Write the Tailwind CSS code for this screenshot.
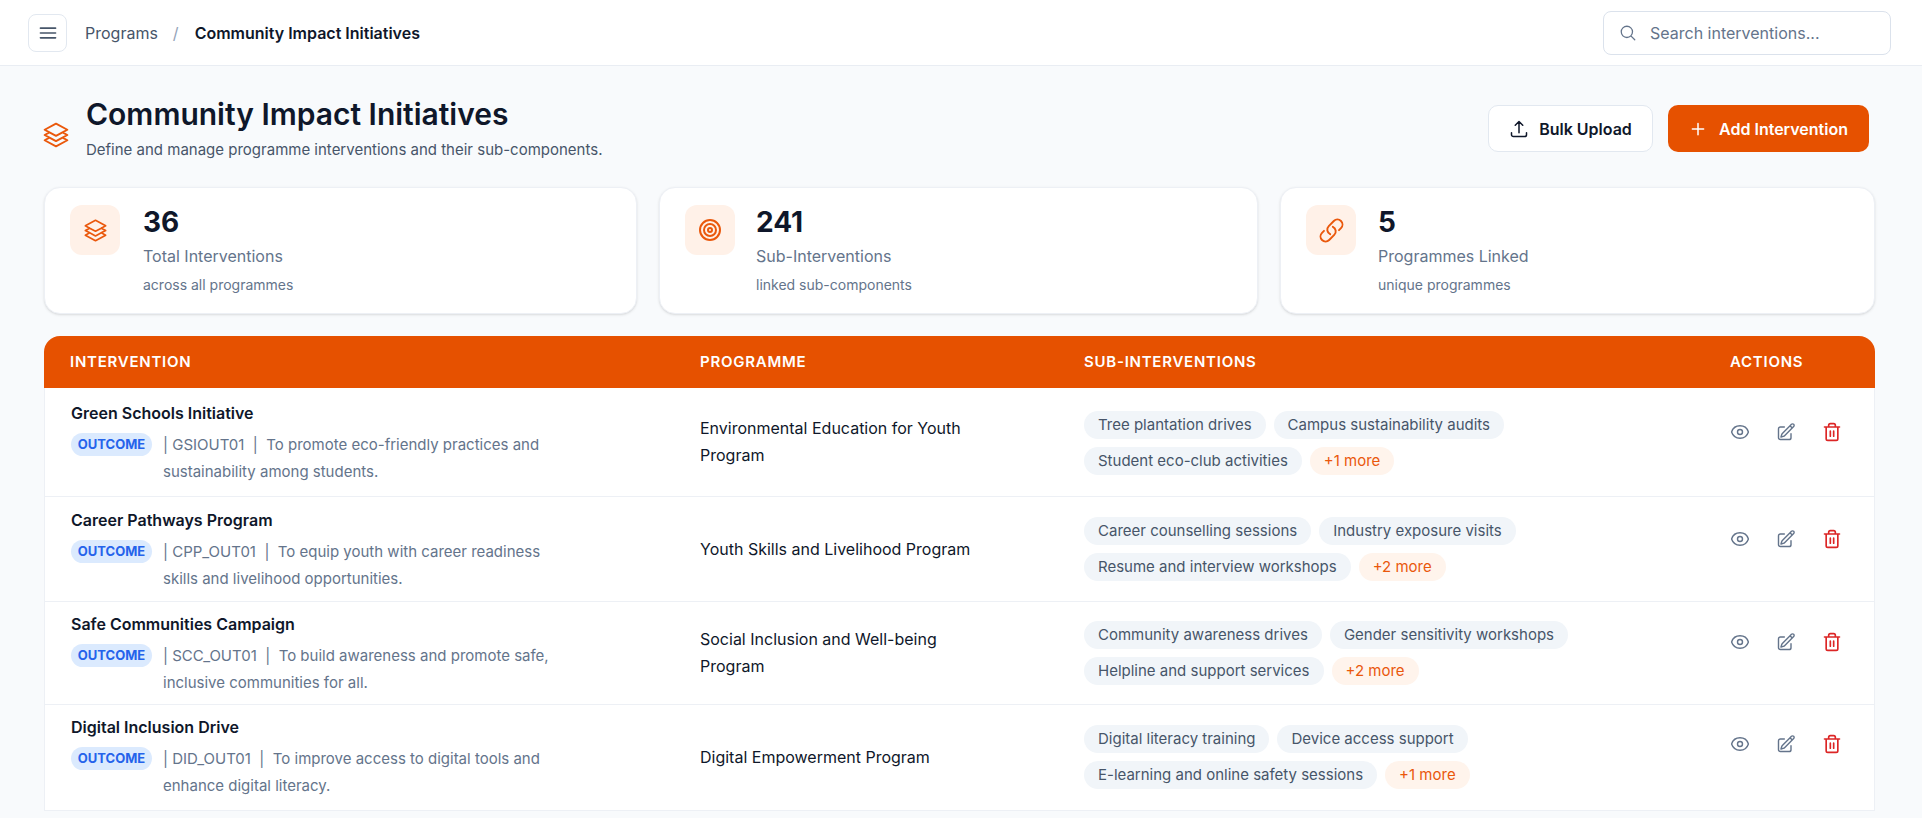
<!DOCTYPE html>
<html lang="en">
<head>
<meta charset="utf-8">
<title>Community Impact Initiatives</title>
<script src="https://cdn.jsdelivr.net/npm/@tailwindcss/browser@4"></script>
</head>
<body class="h-screen overflow-hidden bg-[#f8fafc] font-[Inter,sans-serif] text-[#0f172a]">
  <!-- top bar -->
  <header class="h-[66px] bg-white border-b border-[#e9edf3] pl-[28px] pr-[31px] flex items-center justify-between">
    <div class="flex items-center">
      <button class="w-[39px] h-[38px] flex items-center justify-center rounded-lg border border-[#e2e8f0] bg-white text-[#475569]">
        <svg class="w-[22px] h-[22px]" fill="none" viewBox="0 0 24 24" stroke="currentColor" stroke-width="1.8" stroke-linecap="round"><path d="M3.75 6.75h16.5M3.75 12h16.5m-16.5 5.25h16.5"/></svg>
      </button>
      <span class="ml-[18px] text-[16px] text-[#475569]">Programs</span>
      <span class="ml-[15px] text-[16px] text-[#94a3b8]">/</span>
      <span class="ml-[16px] text-[16px] font-semibold text-[#0f172a]">Community Impact Initiatives</span>
    </div>
    <div class="w-[288px] h-[44px] flex items-center gap-[13px] rounded-lg border border-[#dbe2ec] bg-white pl-[15px]">
      <svg class="w-[18px] h-[18px] shrink-0 text-[#64748b]" fill="none" viewBox="0 0 24 24" stroke="currentColor" stroke-width="1.7" stroke-linecap="round" stroke-linejoin="round"><path d="m21 21-5.197-5.197m0 0A7.5 7.5 0 1 0 5.196 5.196a7.5 7.5 0 0 0 10.607 10.607Z"/></svg>
      <input type="text" placeholder="Search interventions..." class="w-full bg-transparent outline-none text-[16px] placeholder:text-[#64748b]">
    </div>
  </header>

  <main class="pl-[44px] pr-[47px]">
    <!-- title row -->
    <div class="h-[121px] flex items-start justify-between">
      <div class="flex items-center pt-[30px]">
        <svg class="w-[28px] h-[28px] ml-[-2px] mt-[13px] text-[#ea580c]" fill="none" viewBox="0 0 24 24" stroke="currentColor" stroke-width="1.6" stroke-linecap="round" stroke-linejoin="round"><path d="M6.429 9.75 2.25 12l4.179 2.25m0-4.5 5.571 3 5.571-3m-11.142 0L2.25 7.5 12 2.25l9.75 5.25-4.179 2.25m0 0L21.75 12l-4.179 2.25m0 0 4.179 2.25L12 21.75 2.25 16.5l4.179-2.25m11.142 0-5.571 3-5.571-3"/></svg>
        <div class="ml-[16px]">
          <h1 class="text-[30px] leading-[36px] font-semibold text-[#0f172a]">Community Impact Initiatives</h1>
          <p class="mt-[7px] text-[15px] leading-[22px] text-[#475569]">Define and manage programme interventions and their sub-components.</p>
        </div>
      </div>
      <div class="flex items-center gap-[15px] mt-[39px] mr-[6px]">
        <button class="w-[165px] h-[47px] flex items-center justify-center gap-[10px] rounded-[10px] border border-[#e2e8f0] bg-white text-[16px] font-semibold text-[#0f172a]">
          <svg class="w-[20px] h-[20px]" fill="none" viewBox="0 0 24 24" stroke="currentColor" stroke-width="1.8" stroke-linecap="round" stroke-linejoin="round"><path d="M3 16.5v2.25A2.25 2.25 0 0 0 5.25 21h13.5A2.25 2.25 0 0 0 21 18.75V16.5m-13.5-9L12 3m0 0 4.5 4.5M12 3v13.5"/></svg>
          Bulk Upload
        </button>
        <button class="w-[201px] h-[47px] flex items-center justify-center gap-[12px] rounded-[10px] bg-[#e65100] text-[16px] font-semibold text-white">
          <svg class="w-[18px] h-[18px]" fill="none" viewBox="0 0 24 24" stroke="currentColor" stroke-width="2" stroke-linecap="round" stroke-linejoin="round"><path d="M12 4.5v15m7.5-7.5h-15"/></svg>
          Add Intervention
        </button>
      </div>
    </div>

    <!-- stat cards -->
    <div class="grid grid-cols-[593px_599px_595px] gap-[22px]">
      <div class="h-[127px] flex items-start gap-[23px] rounded-2xl border border-[#edf0f5] bg-white pl-[25px] pt-[17px] shadow-sm">
        <div class="w-[50px] h-[50px] flex items-center justify-center rounded-xl bg-[#fff1e8] text-[#ea580c]">
          <svg class="w-[25px] h-[25px]" fill="none" viewBox="0 0 24 24" stroke="currentColor" stroke-width="1.6" stroke-linecap="round" stroke-linejoin="round"><path d="M6.429 9.75 2.25 12l4.179 2.25m0-4.5 5.571 3 5.571-3m-11.142 0L2.25 7.5 12 2.25l9.75 5.25-4.179 2.25m0 0L21.75 12l-4.179 2.25m0 0 4.179 2.25L12 21.75 2.25 16.5l4.179-2.25m11.142 0-5.571 3-5.571-3"/></svg>
        </div>
        <div>
          <div class="text-[28px] leading-[34px] font-bold">36</div>
          <div class="mt-[7px] text-[16px] leading-[20px] text-[#64748b]">Total Interventions</div>
          <div class="mt-[10px] text-[14px] leading-[18px] text-[#64748b]">across all programmes</div>
        </div>
      </div>
      <div class="h-[127px] flex items-start gap-[21px] rounded-2xl border border-[#edf0f5] bg-white pl-[25px] pt-[17px] shadow-sm">
        <div class="w-[50px] h-[50px] flex items-center justify-center rounded-xl bg-[#fff1e8] text-[#ea580c]">
          <svg class="w-[24px] h-[24px]" fill="none" viewBox="0 0 24 24" stroke="currentColor" stroke-width="2"><circle cx="12" cy="12" r="10"/><circle cx="12" cy="12" r="6"/><circle cx="12" cy="12" r="2"/></svg>
        </div>
        <div>
          <div class="text-[28px] leading-[34px] font-bold">241</div>
          <div class="mt-[7px] text-[16px] leading-[20px] text-[#64748b]">Sub-Interventions</div>
          <div class="mt-[10px] text-[14px] leading-[18px] text-[#64748b]">linked sub-components</div>
        </div>
      </div>
      <div class="h-[127px] flex items-start gap-[22px] rounded-2xl border border-[#edf0f5] bg-white pl-[25px] pt-[17px] shadow-sm">
        <div class="w-[50px] h-[50px] flex items-center justify-center rounded-xl bg-[#fff1e8] text-[#ea580c]">
          <svg class="w-[27px] h-[27px]" fill="none" viewBox="0 0 24 24" stroke="currentColor" stroke-width="1.7" stroke-linecap="round" stroke-linejoin="round"><path d="M13.19 8.688a4.5 4.5 0 0 1 1.242 7.244l-4.5 4.5a4.5 4.5 0 0 1-6.364-6.364l1.757-1.757m13.35-.622 1.757-1.757a4.5 4.5 0 0 0-6.364-6.364l-4.5 4.5a4.5 4.5 0 0 0 1.242 7.244"/></svg>
        </div>
        <div>
          <div class="text-[28px] leading-[34px] font-bold">5</div>
          <div class="mt-[7px] text-[16px] leading-[20px] text-[#64748b]">Programmes Linked</div>
          <div class="mt-[10px] text-[14px] leading-[18px] text-[#64748b]">unique programmes</div>
        </div>
      </div>
    </div>

    <!-- interventions table -->
    <table class="mt-[22px] w-[1831px] table-fixed border-separate border-spacing-0">
      <colgroup>
        <col class="w-[630px]">
        <col class="w-[384px]">
        <col class="w-[646px]">
        <col>
      </colgroup>
      <thead>
        <tr class="h-[52px] bg-[#e65100] text-left text-[15px] font-semibold uppercase tracking-[0.05em] text-white">
          <th class="pl-[26px] font-semibold rounded-tl-2xl">Intervention</th>
          <th class="pl-[26px] font-semibold">Programme</th>
          <th class="pl-[26px] font-semibold">Sub-Interventions</th>
          <th class="pl-[26px] font-semibold rounded-tr-2xl">Actions</th>
        </tr>
      </thead>
      <tbody>
        <tr class="h-[109px] bg-white">
          <td class="pl-[26px] align-top pt-[14px] border-b border-l border-[#edf0f5]">
            <div class="text-[16px] leading-[22px] font-semibold">Green Schools Initiative</div>
            <div class="mt-[9px] flex items-start gap-[11px]">
              <span class="h-[23px] w-[81px] shrink-0 flex items-center justify-center rounded-full bg-[#dbeafe] text-[13px] font-bold text-[#2563eb]">OUTCOME</span>
              <p class="max-w-[400px] text-[15px] leading-[27px] mt-[-2px] text-[#64748b]">| GSIOUT01 &nbsp;|&nbsp; To promote eco-friendly practices and sustainability among students.</p>
            </div>
          </td>
          <td class="pl-[26px] border-b border-[#edf0f5] text-[16px] leading-[27px]"><p class="max-w-[300px]">Environmental Education for Youth Program</p></td>
          <td class="pl-[26px] align-top pt-[23px] border-b border-[#edf0f5]">
            <div class="flex flex-wrap gap-[8px] text-[15px] leading-[28px] text-[#475569] max-w-[540px]">
              <span class="rounded-full bg-[#f1f5f9] px-[14px]">Tree plantation drives</span>
              <span class="rounded-full bg-[#f1f5f9] px-[14px]">Campus sustainability audits</span>
              <span class="rounded-full bg-[#f1f5f9] px-[14px]">Student eco-club activities</span>
              <span class="rounded-full bg-[#fff4ec] px-[14px] text-[#ea580c]">+1 more</span>
            </div>
          </td>
          <td class="pl-[26px] align-top pt-[34px] border-b border-r border-[#edf0f5]">
            <div class="flex gap-[26px]">
              <svg class="w-[20px] h-[20px] text-[#64748b]" fill="none" viewBox="0 0 24 24" stroke="currentColor" stroke-width="1.7" stroke-linecap="round" stroke-linejoin="round"><path d="M2.036 12.322a1.012 1.012 0 0 1 0-.639C3.423 7.51 7.36 4.5 12 4.5c4.638 0 8.573 3.007 9.963 7.178.07.207.07.431 0 .639C20.577 16.49 16.64 19.5 12 19.5c-4.638 0-8.573-3.007-9.963-7.178Z"/><path d="M15 12a3 3 0 1 1-6 0 3 3 0 0 1 6 0Z"/></svg>
              <svg class="w-[20px] h-[20px] text-[#64748b]" fill="none" viewBox="0 0 24 24" stroke="currentColor" stroke-width="1.7" stroke-linecap="round" stroke-linejoin="round"><path d="m16.862 4.487 1.687-1.688a1.875 1.875 0 1 1 2.652 2.652L10.582 16.07a4.5 4.5 0 0 1-1.897 1.13L6 18l.8-2.685a4.5 4.5 0 0 1 1.13-1.897l8.932-8.931Zm0 0L19.5 7.125M18 14v4.75A2.25 2.25 0 0 1 15.75 21H5.25A2.25 2.25 0 0 1 3 18.75V8.25A2.25 2.25 0 0 1 5.25 6H10"/></svg>
              <svg class="w-[20px] h-[20px] text-[#dc2626]" fill="none" viewBox="0 0 24 24" stroke="currentColor" stroke-width="2" stroke-linecap="round" stroke-linejoin="round"><path d="M3 6h18M19 6v14a2 2 0 0 1-2 2H7a2 2 0 0 1-2-2V6M8 6V4a2 2 0 0 1 2-2h4a2 2 0 0 1 2 2v2M10 11v6M14 11v6"/></svg>
            </div>
          </td>
        </tr>
        <tr class="h-[105px] bg-white">
          <td class="pl-[26px] align-top pt-[12px] border-b border-l border-[#edf0f5]">
            <div class="text-[16px] leading-[22px] font-semibold">Career Pathways Program</div>
            <div class="mt-[9px] flex items-start gap-[11px]">
              <span class="h-[23px] w-[81px] shrink-0 flex items-center justify-center rounded-full bg-[#dbeafe] text-[13px] font-bold text-[#2563eb]">OUTCOME</span>
              <p class="max-w-[400px] text-[15px] leading-[27px] mt-[-2px] text-[#64748b]">| CPP_OUT01 &nbsp;|&nbsp; To equip youth with career readiness skills and livelihood opportunities.</p>
            </div>
          </td>
          <td class="pl-[26px] border-b border-[#edf0f5] text-[16px] leading-[27px]"><p class="max-w-[300px]">Youth Skills and Livelihood Program</p></td>
          <td class="pl-[26px] align-top pt-[20px] border-b border-[#edf0f5]">
            <div class="flex flex-wrap gap-[8px] text-[15px] leading-[28px] text-[#475569] max-w-[540px]">
              <span class="rounded-full bg-[#f1f5f9] px-[14px]">Career counselling sessions</span>
              <span class="rounded-full bg-[#f1f5f9] px-[14px]">Industry exposure visits</span>
              <span class="rounded-full bg-[#f1f5f9] px-[14px]">Resume and interview workshops</span>
              <span class="rounded-full bg-[#fff4ec] px-[14px] text-[#ea580c]">+2 more</span>
            </div>
          </td>
          <td class="pl-[26px] align-top pt-[32px] border-b border-r border-[#edf0f5]">
            <div class="flex gap-[26px]">
              <svg class="w-[20px] h-[20px] text-[#64748b]" fill="none" viewBox="0 0 24 24" stroke="currentColor" stroke-width="1.7" stroke-linecap="round" stroke-linejoin="round"><path d="M2.036 12.322a1.012 1.012 0 0 1 0-.639C3.423 7.51 7.36 4.5 12 4.5c4.638 0 8.573 3.007 9.963 7.178.07.207.07.431 0 .639C20.577 16.49 16.64 19.5 12 19.5c-4.638 0-8.573-3.007-9.963-7.178Z"/><path d="M15 12a3 3 0 1 1-6 0 3 3 0 0 1 6 0Z"/></svg>
              <svg class="w-[20px] h-[20px] text-[#64748b]" fill="none" viewBox="0 0 24 24" stroke="currentColor" stroke-width="1.7" stroke-linecap="round" stroke-linejoin="round"><path d="m16.862 4.487 1.687-1.688a1.875 1.875 0 1 1 2.652 2.652L10.582 16.07a4.5 4.5 0 0 1-1.897 1.13L6 18l.8-2.685a4.5 4.5 0 0 1 1.13-1.897l8.932-8.931Zm0 0L19.5 7.125M18 14v4.75A2.25 2.25 0 0 1 15.75 21H5.25A2.25 2.25 0 0 1 3 18.75V8.25A2.25 2.25 0 0 1 5.25 6H10"/></svg>
              <svg class="w-[20px] h-[20px] text-[#dc2626]" fill="none" viewBox="0 0 24 24" stroke="currentColor" stroke-width="2" stroke-linecap="round" stroke-linejoin="round"><path d="M3 6h18M19 6v14a2 2 0 0 1-2 2H7a2 2 0 0 1-2-2V6M8 6V4a2 2 0 0 1 2-2h4a2 2 0 0 1 2 2v2M10 11v6M14 11v6"/></svg>
            </div>
          </td>
        </tr>
        <tr class="h-[103px] bg-white">
          <td class="pl-[26px] align-top pt-[11px] border-b border-l border-[#edf0f5]">
            <div class="text-[16px] leading-[22px] font-semibold">Safe Communities Campaign</div>
            <div class="mt-[9px] flex items-start gap-[11px]">
              <span class="h-[23px] w-[81px] shrink-0 flex items-center justify-center rounded-full bg-[#dbeafe] text-[13px] font-bold text-[#2563eb]">OUTCOME</span>
              <p class="max-w-[400px] text-[15px] leading-[27px] mt-[-2px] text-[#64748b]">| SCC_OUT01 &nbsp;|&nbsp; To build awareness and promote safe, inclusive communities for all.</p>
            </div>
          </td>
          <td class="pl-[26px] border-b border-[#edf0f5] text-[16px] leading-[27px]"><p class="max-w-[300px]">Social Inclusion and Well-being Program</p></td>
          <td class="pl-[26px] align-top pt-[19px] border-b border-[#edf0f5]">
            <div class="flex flex-wrap gap-[8px] text-[15px] leading-[28px] text-[#475569] max-w-[540px]">
              <span class="rounded-full bg-[#f1f5f9] px-[14px]">Community awareness drives</span>
              <span class="rounded-full bg-[#f1f5f9] px-[14px]">Gender sensitivity workshops</span>
              <span class="rounded-full bg-[#f1f5f9] px-[14px]">Helpline and support services</span>
              <span class="rounded-full bg-[#fff4ec] px-[14px] text-[#ea580c]">+2 more</span>
            </div>
          </td>
          <td class="pl-[26px] align-top pt-[30px] border-b border-r border-[#edf0f5]">
            <div class="flex gap-[26px]">
              <svg class="w-[20px] h-[20px] text-[#64748b]" fill="none" viewBox="0 0 24 24" stroke="currentColor" stroke-width="1.7" stroke-linecap="round" stroke-linejoin="round"><path d="M2.036 12.322a1.012 1.012 0 0 1 0-.639C3.423 7.51 7.36 4.5 12 4.5c4.638 0 8.573 3.007 9.963 7.178.07.207.07.431 0 .639C20.577 16.49 16.64 19.5 12 19.5c-4.638 0-8.573-3.007-9.963-7.178Z"/><path d="M15 12a3 3 0 1 1-6 0 3 3 0 0 1 6 0Z"/></svg>
              <svg class="w-[20px] h-[20px] text-[#64748b]" fill="none" viewBox="0 0 24 24" stroke="currentColor" stroke-width="1.7" stroke-linecap="round" stroke-linejoin="round"><path d="m16.862 4.487 1.687-1.688a1.875 1.875 0 1 1 2.652 2.652L10.582 16.07a4.5 4.5 0 0 1-1.897 1.13L6 18l.8-2.685a4.5 4.5 0 0 1 1.13-1.897l8.932-8.931Zm0 0L19.5 7.125M18 14v4.75A2.25 2.25 0 0 1 15.75 21H5.25A2.25 2.25 0 0 1 3 18.75V8.25A2.25 2.25 0 0 1 5.25 6H10"/></svg>
              <svg class="w-[20px] h-[20px] text-[#dc2626]" fill="none" viewBox="0 0 24 24" stroke="currentColor" stroke-width="2" stroke-linecap="round" stroke-linejoin="round"><path d="M3 6h18M19 6v14a2 2 0 0 1-2 2H7a2 2 0 0 1-2-2V6M8 6V4a2 2 0 0 1 2-2h4a2 2 0 0 1 2 2v2M10 11v6M14 11v6"/></svg>
            </div>
          </td>
        </tr>
        <tr class="h-[106px] bg-white">
          <td class="pl-[26px] align-top pt-[11px] border-b border-l border-[#edf0f5]">
            <div class="text-[16px] leading-[22px] font-semibold">Digital Inclusion Drive</div>
            <div class="mt-[9px] flex items-start gap-[11px]">
              <span class="h-[23px] w-[81px] shrink-0 flex items-center justify-center rounded-full bg-[#dbeafe] text-[13px] font-bold text-[#2563eb]">OUTCOME</span>
              <p class="max-w-[400px] text-[15px] leading-[27px] mt-[-2px] text-[#64748b]">| DID_OUT01 &nbsp;|&nbsp; To improve access to digital tools and enhance digital literacy.</p>
            </div>
          </td>
          <td class="pl-[26px] border-b border-[#edf0f5] text-[16px] leading-[27px]"><p class="max-w-[300px]">Digital Empowerment Program</p></td>
          <td class="pl-[26px] align-top pt-[20px] border-b border-[#edf0f5]">
            <div class="flex flex-wrap gap-[8px] text-[15px] leading-[28px] text-[#475569] max-w-[540px]">
              <span class="rounded-full bg-[#f1f5f9] px-[14px]">Digital literacy training</span>
              <span class="rounded-full bg-[#f1f5f9] px-[14px]">Device access support</span>
              <span class="rounded-full bg-[#f1f5f9] px-[14px]">E-learning and online safety sessions</span>
              <span class="rounded-full bg-[#fff4ec] px-[14px] text-[#ea580c]">+1 more</span>
            </div>
          </td>
          <td class="pl-[26px] align-top pt-[29px] border-b border-r border-[#edf0f5]">
            <div class="flex gap-[26px]">
              <svg class="w-[20px] h-[20px] text-[#64748b]" fill="none" viewBox="0 0 24 24" stroke="currentColor" stroke-width="1.7" stroke-linecap="round" stroke-linejoin="round"><path d="M2.036 12.322a1.012 1.012 0 0 1 0-.639C3.423 7.51 7.36 4.5 12 4.5c4.638 0 8.573 3.007 9.963 7.178.07.207.07.431 0 .639C20.577 16.49 16.64 19.5 12 19.5c-4.638 0-8.573-3.007-9.963-7.178Z"/><path d="M15 12a3 3 0 1 1-6 0 3 3 0 0 1 6 0Z"/></svg>
              <svg class="w-[20px] h-[20px] text-[#64748b]" fill="none" viewBox="0 0 24 24" stroke="currentColor" stroke-width="1.7" stroke-linecap="round" stroke-linejoin="round"><path d="m16.862 4.487 1.687-1.688a1.875 1.875 0 1 1 2.652 2.652L10.582 16.07a4.5 4.5 0 0 1-1.897 1.13L6 18l.8-2.685a4.5 4.5 0 0 1 1.13-1.897l8.932-8.931Zm0 0L19.5 7.125M18 14v4.75A2.25 2.25 0 0 1 15.75 21H5.25A2.25 2.25 0 0 1 3 18.75V8.25A2.25 2.25 0 0 1 5.25 6H10"/></svg>
              <svg class="w-[20px] h-[20px] text-[#dc2626]" fill="none" viewBox="0 0 24 24" stroke="currentColor" stroke-width="2" stroke-linecap="round" stroke-linejoin="round"><path d="M3 6h18M19 6v14a2 2 0 0 1-2 2H7a2 2 0 0 1-2-2V6M8 6V4a2 2 0 0 1 2-2h4a2 2 0 0 1 2 2v2M10 11v6M14 11v6"/></svg>
            </div>
          </td>
        </tr>
      </tbody>
    </table>
  </main>
</body>
</html>
